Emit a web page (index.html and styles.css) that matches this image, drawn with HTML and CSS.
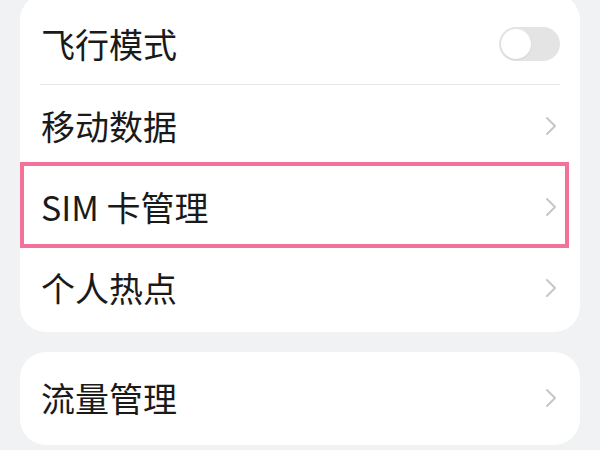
FILE: index.html
```html
<!DOCTYPE html>
<html lang="zh-CN">

<head>
    <meta charset="utf-8">
    <meta name="viewport" content="width=device-width, initial-scale=1.0">
    <title>移动网络</title>
    <link rel="stylesheet" href="styles.css">
</head>

<body>
    <main class="settings">
        <section class="card card-top">
            <div class="row">
                <span class="label">飞行模式</span>
                <span class="switch" aria-hidden="true"><span class="knob"></span></span>
            </div>
            <div class="row">
                <span class="label">移动数据</span>
                <svg class="chevron" viewBox="0 0 12 20" aria-hidden="true">
                    <path d="M2 2l8 8-8 8"></path>
                </svg>
            </div>
            <div class="row highlight">
                <span class="label">SIM 卡管理</span>
                <svg class="chevron" viewBox="0 0 12 20" aria-hidden="true">
                    <path d="M2 2l8 8-8 8"></path>
                </svg>
            </div>
            <div class="row">
                <span class="label">个人热点</span>
                <svg class="chevron" viewBox="0 0 12 20" aria-hidden="true">
                    <path d="M2 2l8 8-8 8"></path>
                </svg>
            </div>
        </section>
        <section class="card card-bottom">
            <div class="row">
                <span class="label">流量管理</span>
                <svg class="chevron" viewBox="0 0 12 20" aria-hidden="true">
                    <path d="M2 2l8 8-8 8"></path>
                </svg>
            </div>
        </section>
    </main>
</body>

</html>
```

FILE: styles.css
```css
*,
*::after,
*::before {
    margin: 0;
    padding: 0;
    box-sizing: border-box;
}

body {
    background-color: #f1f2f4;
    font-family: "Noto Sans CJK SC", "Noto Sans", sans-serif;
    color: #1a1a1a;
    overflow: hidden;
}

.settings {
    display: flex;
    flex-direction: column;
    gap: 20px;
    padding: 0 20px;
    margin-top: -6px;
}

.card {
    background-color: #fff;
    border-radius: 26px;
    padding: 0 20px;
}

.card-top {
    padding-top: 10px;
    padding-bottom: 4px;
}

.card-bottom {
    padding-top: 5px;
    padding-bottom: 7px;
}

.row {
    position: relative;
    display: flex;
    align-items: center;
    justify-content: space-between;
    height: 81px;
}

.card-top .row:first-child {
    border-bottom: 1px solid #e6e6e6;
}

.label {
    font-size: 34px;
    line-height: 1;
    padding-left: 1px;
}

.switch {
    display: flex;
    align-items: center;
    width: 61px;
    height: 34px;
    padding: 2px;
    border-radius: 17px;
    background-color: #e4e4e4;
}

.knob {
    width: 30px;
    height: 30px;
    border-radius: 50%;
    background-color: #fff;
    box-shadow: 0 1px 2px rgba(0, 0, 0, .08);
}

.chevron {
    width: 12px;
    height: 22px;
    margin-right: 3px;
    fill: none;
    stroke: #c6c6c6;
    stroke-width: 2;
    stroke-linecap: round;
    stroke-linejoin: round;
}

/* annotation box drawn over the SIM row */
.highlight::after {
    content: "";
    position: absolute;
    top: -4px;
    bottom: -1px;
    left: -20px;
    right: -9px;
    border: 4px solid #f2729a;
    pointer-events: none;
}
```
